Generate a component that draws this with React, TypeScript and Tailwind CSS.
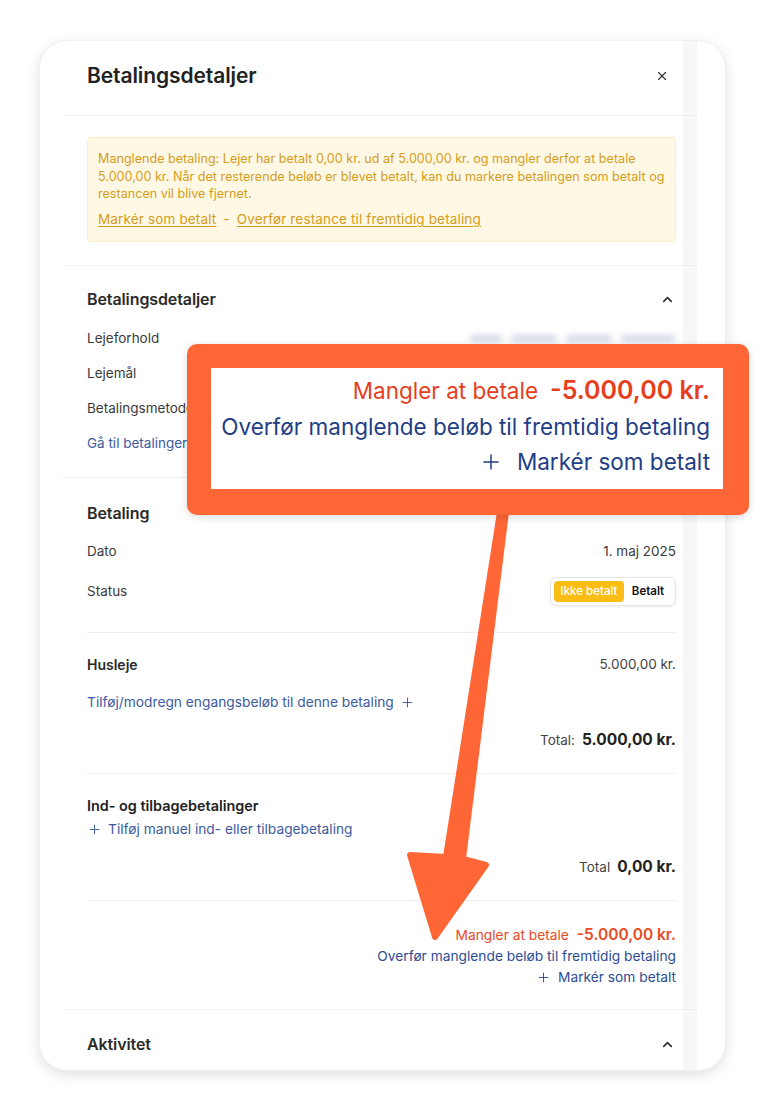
import { X, ChevronUp, Plus } from 'lucide-react';

const Label = ({ children }: { children: React.ReactNode }) => (
  <span className="text-[13.5px] text-[#3a3a3a]">{children}</span>
);

const App = () => {
  return (
    <div className="relative h-[1110px] w-[765px] overflow-hidden bg-white font-['Inter','Noto_Sans',sans-serif] text-[#2a2a2a]">
      {/* Panel card */}
      <div className="ml-[39px] mt-[40px] flex h-[1031px] w-[687px] overflow-hidden rounded-[28px] border border-[#f0f0f0] bg-white shadow-[0_4px_14px_rgba(0,0,0,0.12)]">
        <div className="w-[23px] shrink-0" />
        <div className="flex w-[634px] shrink-0 flex-col bg-[linear-gradient(to_right,#ffffff_620px,#f7f7f7_620px)]">
          {/* Header */}
          <div className="flex h-[75px] shrink-0 items-center justify-between border-b border-[#eeeeee] pb-[4px] pl-6 pr-[21px]">
            <h1 className="text-[21px] font-semibold tracking-[-0.1px] text-[#222]">Betalingsdetaljer</h1>
            <button className="mr-[2px] flex h-[24px] w-[24px] items-center justify-center text-[#333]">
              <X size={14} strokeWidth={2} />
            </button>
          </div>

          {/* Warning */}
          <div className="shrink-0 border-b border-[#eeeeee] pb-[23px] pl-6 pr-[21px] pt-[21px]">
            <div className="h-[105px] rounded-[4px] border border-[#fbeec6] bg-[#fef8e5] px-[10px] pt-[12px] text-[#d59d20]">
              <p className="whitespace-nowrap text-[12.6px] leading-[17.5px]">
                Manglende betaling: Lejer har betalt 0,00 kr. ud af 5.000,00 kr. og mangler derfor at betale
                <br />
                5.000,00 kr. Når det resterende beløb er blevet betalt, kan du markere betalingen som betalt og
                <br />
                restancen vil blive fjernet.
              </p>
              <div className="mt-[8px] flex h-[18px] items-center gap-[7px] text-[13.5px] tracking-[0.15px]">
                <span className="underline underline-offset-2">Markér som betalt</span>
                <span>-</span>
                <span className="underline underline-offset-2">Overfør restance til fremtidig betaling</span>
              </div>
            </div>
          </div>

          {/* Betalingsdetaljer section */}
          <div className="shrink-0 border-b border-[#eeeeee] pb-[16px] pl-6 pr-[21px] pt-[21px]">
            <div className="flex h-[24px] items-center justify-between">
              <h2 className="text-[16px] font-semibold tracking-[-0.1px]">Betalingsdetaljer</h2>
              <span className="flex w-[18px] justify-center">
                <ChevronUp size={15} strokeWidth={2.5} />
              </span>
            </div>
            <div className="mt-[10px] flex h-[35px] items-center justify-between">
              <Label>Lejeforhold</Label>
              <div className="flex items-center gap-[9px] pr-[1px] blur-[3px]">
                <span className="h-[7px] w-[32px] rounded-full bg-[#d2d7e6]" />
                <span className="h-[7px] w-[46px] rounded-full bg-[#d2d7e6]" />
                <span className="h-[7px] w-[46px] rounded-full bg-[#d2d7e6]" />
                <span className="h-[7px] w-[54px] rounded-full bg-[#d2d7e6]" />
              </div>
            </div>
            <div className="flex h-[35px] items-center">
              <Label>Lejemål</Label>
            </div>
            <div className="flex h-[35px] items-center">
              <Label>Betalingsmetode</Label>
            </div>
            <div className="flex h-[35px] items-center">
              <span className="text-[13.5px] text-[#3c5ba0]">Gå til betalingerne</span>
            </div>
          </div>

          {/* Betaling section */}
          <div className="shrink-0 border-b border-[#eeeeee] pl-6 pr-[21px]">
            <div className="border-b border-[#eeeeee] pb-[20px] pt-[23px]">
              <div className="flex h-[24px] items-center">
                <h2 className="text-[16px] font-semibold tracking-[-0.1px]">Betaling</h2>
              </div>
              <div className="mt-[8px] flex h-[36px] items-center justify-between">
                <Label>Dato</Label>
                <Label>1. maj 2025</Label>
              </div>
              <div className="mt-[2px] flex h-[41px] items-center justify-between">
                <Label>Status</Label>
                <div className="flex h-[29px] w-[126px] items-center rounded-[6px] border border-[#e6e6e6] bg-white p-[3px] shadow-[0_1px_3px_rgba(0,0,0,0.08)]">
                  <span className="flex h-[21px] w-[70px] items-center justify-center rounded-[4px] bg-[#fbbd14] text-[11.5px] font-medium text-white">
                    Ikke betalt
                  </span>
                  <span className="flex flex-1 items-center justify-center text-[11.5px] font-semibold text-[#111]">Betalt</span>
                </div>
              </div>
            </div>

            <div className="border-b border-[#eeeeee] pb-[21px] pt-[19px]">
              <div className="flex h-[24px] items-center justify-between">
                <span className="text-[14px] font-semibold text-[#2a2a2a]">Husleje</span>
                <span className="text-[13.5px] text-[#444]">5.000,00 kr.</span>
              </div>
              <div className="mt-[14px] flex h-[24px] items-center gap-[6px] text-[13.75px] text-[#3c5ba0]">
                <span>Tilføj/modregn engangsbeløb til denne betaling</span>
                <Plus size={15} strokeWidth={1.5} />
              </div>
              <div className="mt-[14px] flex h-[24px] items-center justify-end gap-[7px]">
                <span className="text-[13.5px] text-[#444]">Total:</span>
                <span className="text-[15.5px] font-bold text-[#222]">5.000,00 kr.</span>
              </div>
            </div>

            <div className="border-b border-[#eeeeee] pb-[21px] pt-[22px]">
              <div className="flex h-[20px] items-center">
                <span className="text-[14.4px] font-semibold text-[#222]">Ind- og tilbagebetalinger</span>
              </div>
              <div className="mt-[3px] flex h-[20px] items-center gap-[6px] text-[13.75px] text-[#3c5ba0]">
                <Plus size={15} strokeWidth={1.5} />
                <span>Tilføj manuel ind- eller tilbagebetaling</span>
              </div>
              <div className="mt-[16px] flex h-[24px] items-center justify-end gap-[7px]">
                <span className="text-[13.5px] text-[#444]">Total</span>
                <span className="text-[15.5px] font-bold text-[#222]">0,00 kr.</span>
              </div>
            </div>

            <div className="flex flex-col items-end gap-[1px] pb-[22px] pt-[24px]">
              <div className="flex h-[20px] items-center gap-[8px] text-[#ea4a24]">
                <span className="text-[13.75px]">Mangler at betale</span>
                <span className="text-[15.5px] font-semibold">-5.000,00 kr.</span>
              </div>
              <div className="flex h-[20px] items-center text-[13.75px] text-[#2d4d93]">
                Overfør manglende beløb til fremtidig betaling
              </div>
              <div className="flex h-[20px] items-center gap-[7px] text-[13.75px] text-[#2d4d93]">
                <Plus size={15} strokeWidth={1.5} />
                <span>Markér som betalt</span>
              </div>
            </div>
          </div>

          {/* Aktivitet */}
          <div className="shrink-0 pl-6 pr-[21px] pt-[22px]">
            <div className="flex h-[24px] items-center justify-between">
              <h2 className="text-[16px] font-semibold tracking-[-0.1px]">Aktivitet</h2>
              <span className="flex w-[18px] justify-center">
                <ChevronUp size={15} strokeWidth={2.5} />
              </span>
            </div>
          </div>
        </div>
        <div className="flex-1" />
      </div>

      {/* Annotation arrow */}
      <svg className="pointer-events-none absolute left-0 top-0 h-[1110px] w-[765px]" viewBox="0 0 765 1110">
        <polygon
          points="500,512 506,512 463,859 486,865 435,937 410,855 446,857"
          fill="#fe6636"
          stroke="#fe6636"
          strokeWidth={6}
          strokeLinejoin="round"
        />
      </svg>

      {/* Annotation callout */}
      <div className="absolute left-[187px] top-[344px] h-[171px] w-[562px] rounded-[10px] bg-[#fe6636] pb-[26px] pl-[24px] pr-[26px] pt-[24px] shadow-[0_2px_8px_rgba(0,0,0,0.15)]">
        <div className="flex h-full flex-col items-end bg-white pr-[13px] pt-[5px]">
          <div className="flex h-[36px] items-center gap-[12px] text-[#e63e1c]">
            <span className="text-[22.5px]">Mangler at betale</span>
            <span className="text-[25px] font-semibold">-5.000,00 kr.</span>
          </div>
          <div className="flex h-[36px] items-center text-[22.5px] text-[#1f3e86]">
            Overfør manglende beløb til fremtidig betaling
          </div>
          <div className="flex h-[34px] items-center gap-[14px] text-[22.5px] text-[#1f3e86]">
            <Plus size={24} strokeWidth={1.5} />
            <span>Markér som betalt</span>
          </div>
        </div>
      </div>
    </div>
  );
};

export default App;
